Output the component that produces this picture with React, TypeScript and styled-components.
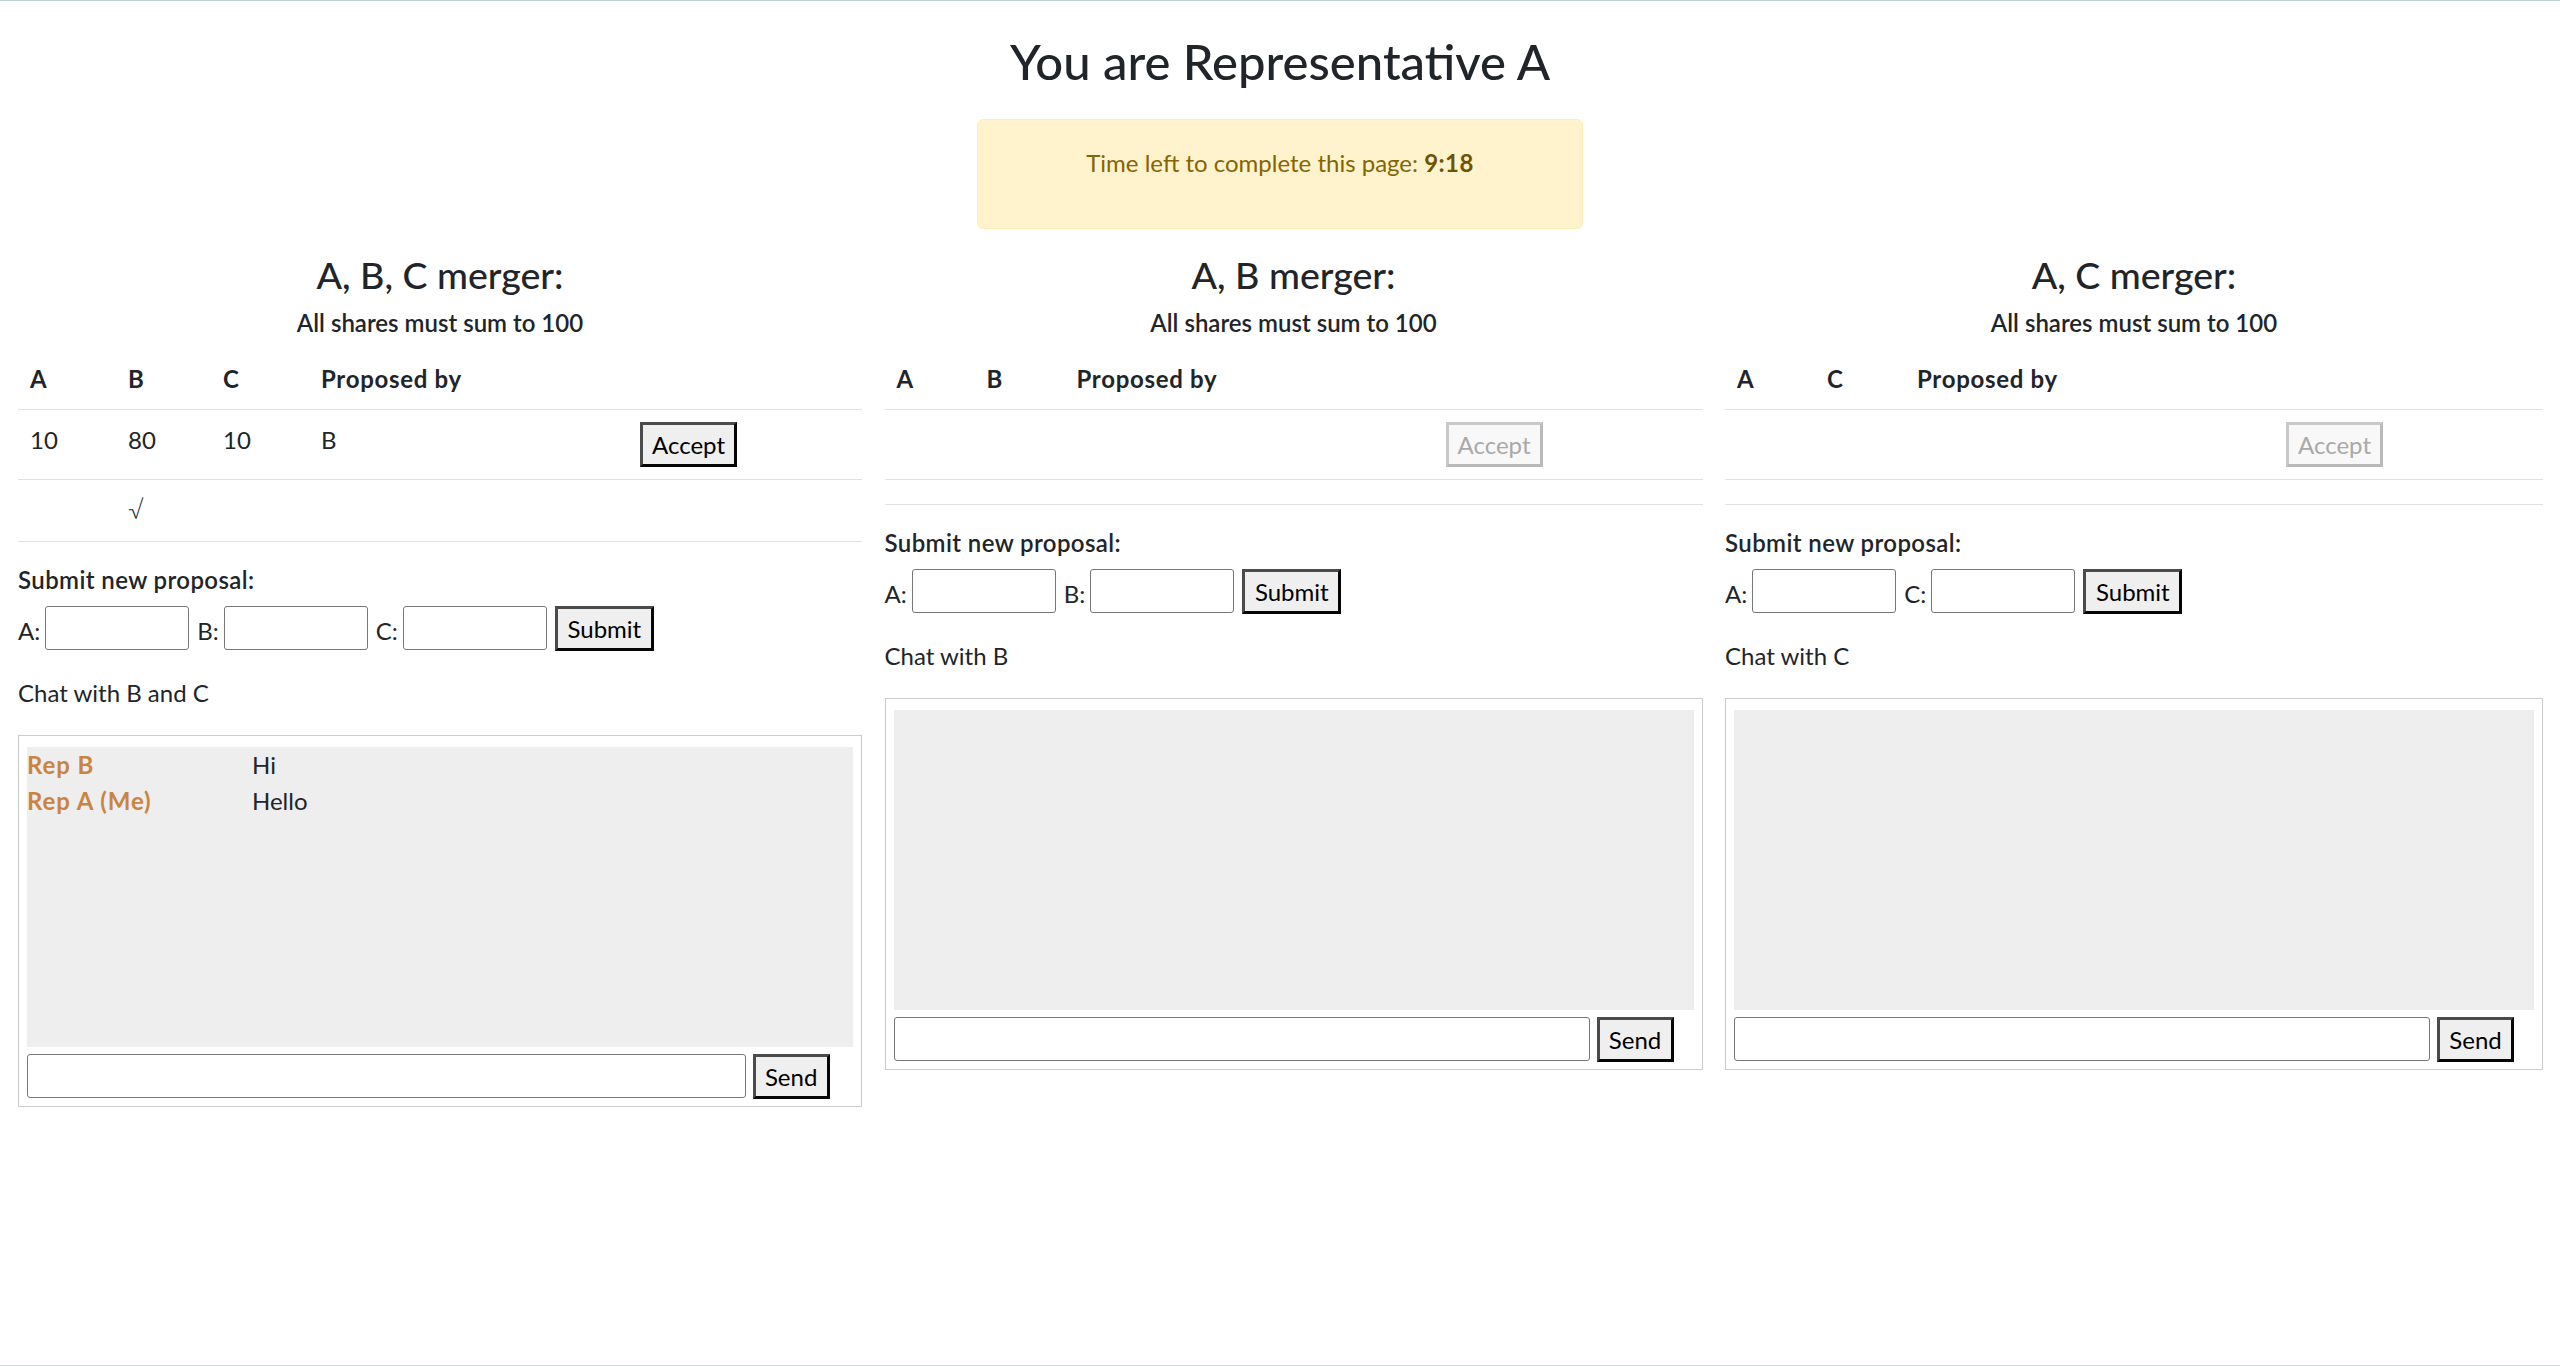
import React from "react";
import styled, { createGlobalStyle } from "styled-components";

const GlobalStyle = createGlobalStyle`
  html, body {
    margin: 0;
    padding: 0;
    background: #ffffff;
  }
  body {
    font-family: Lato, "Noto Sans", "Liberation Sans", sans-serif;
    font-size: 24px;
    line-height: 36px;
    color: #212529;
  }
  * { box-sizing: border-box; }
`;

const Page = styled.div`
  min-height: 1366px;
  border-top: 1px solid #bcd4d5;
  border-bottom: 1px solid #d6dddd;
  padding-top: 31px;
`;

const Title = styled.h1`
  margin: 0;
  text-align: center;
  font-size: 49px;
  line-height: 59px;
  font-weight: 500;
  color: #212529;
`;

const TimerAlert = styled.div`
  width: 606px;
  height: 110px;
  margin: 28px auto 0;
  padding: 25px 30px 0;
  background: #fff3cd;
  border: 1px solid #ffeeba;
  border-radius: 6px;
  color: #856404;
  text-align: center;
`;

const TimeValue = styled.b`
  font-weight: 700;
  color: #6f5303;
  letter-spacing: 0.4px;
`;

const Columns = styled.div`
  display: flex;
  justify-content: space-between;
  align-items: flex-start;
  padding: 0 17px 0 18px;
  margin-top: 23px;
`;

const Column = styled.section<{ $width: number }>`
  width: ${(p) => p.$width}px;
  flex: none;
`;

const MergerHeading = styled.h3`
  margin: 0;
  text-align: center;
  font-size: 37.5px;
  line-height: 46px;
  font-weight: 500;
`;

const Subtitle = styled.h6`
  margin: 7px 0 0;
  text-align: center;
  font-size: 24px;
  line-height: 36px;
  font-weight: 600;
`;

const Table = styled.div`
  margin-top: 8px;
  border-bottom: 1px solid #dee2e6;
`;

const Row = styled.div<{ $cols: string; $divider?: boolean }>`
  display: grid;
  grid-template-columns: ${(p) => p.$cols};
  border-top: ${(p) => (p.$divider ? "1px solid #dee2e6" : "none")};
`;

const Cell = styled.div<{ $head?: boolean }>`
  padding: 12px;
  font-weight: ${(p) => (p.$head ? 700 : 400)};
  letter-spacing: ${(p) => (p.$head ? "0.7px" : "0")};
  white-space: nowrap;
`;

const Check = styled.span`
  font-family: "DejaVu Sans", Lato, sans-serif;
  font-size: 25px;
  font-weight: 300;
  color: #212529;
`;

const Button = styled.button<{ $width: number }>`
  width: ${(p) => p.$width}px;
  height: 45px;
  padding: 0;
  margin: 0;
  display: inline-flex;
  align-items: center;
  justify-content: center;
  font-family: Lato, "Noto Sans", sans-serif;
  font-size: 24px;
  line-height: 1;
  color: #000000;
  background: #efefef;
  border: 3px solid;
  border-color: #4b4b4b #050505 #050505 #4b4b4b;
  border-radius: 0;
  flex: none;
  cursor: pointer;

  &:disabled {
    color: #a9a9a9;
    background: #f8f8f8;
    border-color: #c9c9c9 #b9b9b9 #b9b9b9 #c9c9c9;
    cursor: default;
  }
`;

const SectionLabel = styled.div`
  margin-top: 20px;
  font-weight: 600;
  letter-spacing: 0.4px;
`;

const ProposalForm = styled.form`
  display: flex;
  align-items: flex-start;
  margin-top: 8px;
  height: 45px;
`;

const FieldLabel = styled.label`
  line-height: 45px;
  padding-top: 2px;
  margin-right: 5px;
`;

const ShareInput = styled.input`
  width: 144px;
  height: 44px;
  margin: 0 8px 0 0;
  padding: 0 4px;
  border: 1px solid #767676;
  border-radius: 3px;
  font-family: Lato, sans-serif;
  font-size: 24px;
  background: #ffffff;
  flex: none;
`;

const ChatLabel = styled.div`
  margin-top: 24px;
`;

const ChatBox = styled.div`
  margin-top: 24px;
  border: 1px solid #cccccc;
  padding: 11px 8px 7px;
`;

const Messages = styled.div`
  height: 300px;
  background: #eeeeee;
  overflow: auto;
`;

const Message = styled.div`
  display: grid;
  grid-template-columns: 225px 1fr;
`;

const Nickname = styled.span`
  font-weight: 700;
  letter-spacing: 0.9px;
  color: #c98442;
`;

const ChatForm = styled.form`
  display: flex;
  align-items: flex-start;
  gap: 7px;
  margin-top: 7px;
  height: 45px;
`;

const ChatInput = styled.input`
  width: 87%;
  height: 44px;
  margin: 0;
  padding: 0 4px;
  border: 1px solid #767676;
  border-radius: 3px;
  font-family: Lato, sans-serif;
  font-size: 24px;
  background: #ffffff;
  flex: none;
`;

type Proposal = { shares: string[]; by: string; canAccept: boolean };

type Merger = {
  title: string;
  parties: string[];
  width: number;
  cols: string;
  proposals: Proposal[];
  accepted: string[];
  chatWith: string;
  messages: { who: string; text: string }[];
};

const mergers: Merger[] = [
  {
    title: "A, B, C merger:",
    parties: ["A", "B", "C"],
    width: 844,
    cols: "98px 95px 98px 319px 1fr",
    proposals: [{ shares: ["10", "80", "10"], by: "B", canAccept: true }],
    accepted: ["", "\u221A", ""],
    chatWith: "Chat with B and C",
    messages: [
      { who: "Rep B", text: "Hi" },
      { who: "Rep A (Me)", text: "Hello" },
    ],
  },
  {
    title: "A, B merger:",
    parties: ["A", "B"],
    width: 818,
    cols: "90px 90px 369px 1fr",
    proposals: [{ shares: ["", ""], by: "", canAccept: false }],
    accepted: [],
    chatWith: "Chat with B",
    messages: [],
  },
  {
    title: "A, C merger:",
    parties: ["A", "C"],
    width: 818,
    cols: "90px 90px 369px 1fr",
    proposals: [{ shares: ["", ""], by: "", canAccept: false }],
    accepted: [],
    chatWith: "Chat with C",
    messages: [],
  },
];

function MergerColumn({ m }: { m: Merger }) {
  return (
    <Column $width={m.width}>
      <MergerHeading>{m.title}</MergerHeading>
      <Subtitle>All shares must sum to 100</Subtitle>
      <Table>
        <Row $cols={m.cols}>
          {m.parties.map((p) => (
            <Cell $head key={p}>
              {p}
            </Cell>
          ))}
          <Cell $head>Proposed by</Cell>
          <Cell $head />
        </Row>
        {m.proposals.map((pr, i) => (
          <Row $cols={m.cols} $divider key={i}>
            {pr.shares.map((s, j) => (
              <Cell key={j}>{s}</Cell>
            ))}
            <Cell>{pr.by}</Cell>
            <Cell>
              <Button type="button" $width={97} disabled={!pr.canAccept}>
                Accept
              </Button>
            </Cell>
          </Row>
        ))}
        <Row $cols={m.cols} $divider>
          {m.parties.map((p, j) => (
            <Cell key={p}>
              {m.accepted[j] ? <Check>{m.accepted[j]}</Check> : null}
            </Cell>
          ))}
          <Cell />
          <Cell />
        </Row>
      </Table>

      <SectionLabel>Submit new proposal:</SectionLabel>
      <ProposalForm onSubmit={(e) => e.preventDefault()}>
        {m.parties.map((p) => (
          <React.Fragment key={p}>
            <FieldLabel>{p}:</FieldLabel>
            <ShareInput type="text" />
          </React.Fragment>
        ))}
        <Button type="submit" $width={99}>
          Submit
        </Button>
      </ProposalForm>

      <ChatLabel>{m.chatWith}</ChatLabel>
      <ChatBox>
        <Messages>
          {m.messages.map((msg, i) => (
            <Message key={i}>
              <Nickname>{msg.who}</Nickname>
              <span>{msg.text}</span>
            </Message>
          ))}
        </Messages>
        <ChatForm onSubmit={(e) => e.preventDefault()}>
          <ChatInput type="text" />
          <Button type="submit" $width={77}>
            Send
          </Button>
        </ChatForm>
      </ChatBox>
    </Column>
  );
}

export default function App() {
  return (
    <>
      <GlobalStyle />
      <Page>
        <Title>You are Representative A</Title>
        <TimerAlert>
          Time left to complete this page: <TimeValue>9:18</TimeValue>
        </TimerAlert>
        <Columns>
          {mergers.map((m) => (
            <MergerColumn m={m} key={m.title} />
          ))}
        </Columns>
      </Page>
    </>
  );
}
